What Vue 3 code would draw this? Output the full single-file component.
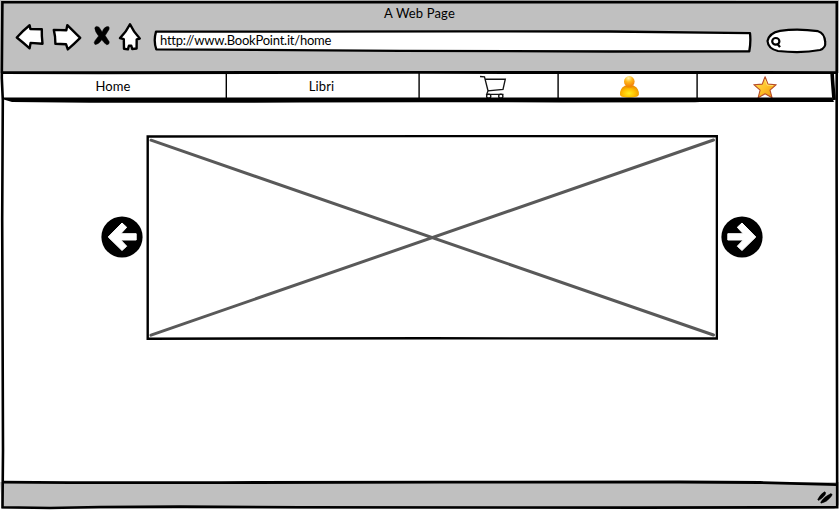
<script setup>
const tabs = [
  { id: 'home', label: 'Home' },
  { id: 'libri', label: 'Libri' },
  { id: 'cart' },
  { id: 'user' },
  { id: 'star' },
]
const arrow = 'M108.2 237 L122 223 L126.7 227.3 L120.8 233.7 H136.2 V240 H120.8 L126.7 246.2 L122 250.5 Z'
</script>

<template>
  <main class="window">
    <header class="chrome">
      <h1 class="title"><span>A Web Page</span></h1>
      <div class="toolbar">
        <svg class="buttons" width="140" height="36" viewBox="8 20 140 36">
          <g fill="#fff" stroke="#000" stroke-width="2.4" stroke-linejoin="round">
            <path d="M16.8 37.5 Q23 30.5 29.6 25.2 L30.4 29 L41.8 29.3 Q41.6 36 42.5 43.7 L30.6 42.9 L29.6 48.3 Q23 42.5 16.8 37.5Z" />
            <path d="M53.8 29.9 L66.3 30.3 L67.3 25.2 Q73.5 31.3 80.2 37.9 Q74 44.1 67.8 49.4 L66 44.2 L55.4 43.7 Q55.5 36.5 53.8 29.9Z" />
            <path d="M130 24.3 Q133.5 32 139.8 38.5 L136.7 39.3 L136.6 48.5 L132.2 49 L131.3 45.8 L128.9 45.8 L127.9 49.4 L124 48.7 L123.8 39.2 L120 38.2 Q126.5 31.5 130 24.3Z" />
          </g>
          <path d="M94.8 27.8 Q96 25.3 99 27.2 L102.2 32 Q104 26.5 108.4 26.6 Q109.7 27.5 109 29.4 L105.2 35.6 L109.2 41.8 Q109.6 44.5 106.8 44.8 Q103.8 42.8 101.8 39.8 Q98.5 44.7 95 44.5 Q93.3 42.8 95 40.7 L98.6 36 Q94.8 31.5 94.8 27.8Z" stroke="#000" stroke-width=".5" />
        </svg>
        <div class="address">
          <svg class="outline" width="602" height="26" viewBox="152 28 602 26">
            <path d="M156 31.6 L285 31.7 L460 31.4 L610 31.5 L750 33.2 Q751 42 749.3 51.3 L610 51.5 L400 50.8 L156.3 49.3 Q153.3 41 156 31.6Z" fill="#fff" stroke="#000" stroke-width="2.3" stroke-linejoin="round" />
          </svg>
          <span class="url">http://www.BookPoint.it/home</span>
        </div>
        <svg class="search" width="66" height="30" viewBox="764 26 66 30" fill="none" stroke="#000" stroke-width="2.2">
          <path d="M780 30.8 Q798 28.2 818 31.2 Q824.5 33 825.2 42 Q826 48 820 50 Q802 53.5 778 51 Q768.2 49 767.5 41 Q769 33 780 30.8Z" fill="#fff" />
          <ellipse cx="775.8" cy="41.3" rx="3.6" ry="3.3" />
          <path d="M777.2 43.5 L780 47.2" />
        </svg>
      </div>
    </header>

    <nav class="tabs">
      <a v-for="tab in tabs" :key="tab.id" class="tab" :class="tab.id">
        <span v-if="tab.label">{{ tab.label }}</span>
        <svg v-else-if="tab.id === 'cart'" width="30" height="24" viewBox="478 75 30 24" fill="none" stroke="#151515" stroke-width="1.35">
          <path d="M480 76.5 L484.5 76.8 L488.2 91.5 M485.1 79.2 H505.3 L503 89.4 L488 90.9 L486.7 94.3 H503.5" />
          <circle cx="488.7" cy="96.2" r="2.1" /><circle cx="500.8" cy="96.2" r="2.1" />
        </svg>
        <svg v-else-if="tab.id === 'user'" width="24" height="24" viewBox="618 75 24 24">
          <defs>
            <radialGradient id="head" cx=".42" cy=".2" r=".9"><stop offset="0" stop-color="#fff5b0" /><stop offset=".4" stop-color="#ffb91c" /><stop offset="1" stop-color="#f07000" /></radialGradient>
            <radialGradient id="body" cx=".48" cy=".65" r=".65"><stop offset="0" stop-color="#ffed20" /><stop offset=".5" stop-color="#ffc000" /><stop offset="1" stop-color="#e88400" /></radialGradient>
          </defs>
          <path d="M624.6 86 Q629.4 84 634.2 86 Q639 88 638.9 94.5 Q638.5 96.6 635 97 Q629.4 98.6 623.5 97 Q620.2 96.5 620 94.5 Q619.9 88 624.6 86Z" fill="url(#body)" />
          <circle cx="629.3" cy="81.4" r="5.3" fill="url(#head)" />
          <path d="M624.8 85.6 Q629.5 89.6 634 85.6" fill="none" stroke="#e98a00" stroke-width=".7" />
        </svg>
        <svg v-else width="26" height="24" viewBox="752 75 26 24">
          <defs><linearGradient id="gold" x1="0" y1="0" x2="1" y2="1"><stop offset="0" stop-color="#ffe263" /><stop offset=".5" stop-color="#ffc329" /><stop offset="1" stop-color="#e98b09" /></linearGradient></defs>
          <path d="M765.1 76.7 L768 84.1 L776.3 84.7 L770 90.1 L772.1 97.8 L765.1 93.7 L758.1 97.8 L760.1 90.1 L753.8 84.7 L762.2 84.1Z" fill="url(#gold)" stroke="#b64b29" stroke-width="1.1" stroke-linejoin="round" />
          <path d="M765.1 79.5 L767.2 85.1 L773.2 85.6" fill="none" stroke="#ffe887" stroke-width=".8" />
        </svg>
      </a>
    </nav>

    <section class="content">
      <svg class="arrow" width="42" height="42" viewBox="101 216 42 42">
        <circle cx="122" cy="237" r="20.6" />
        <path :d="arrow" fill="#fff" stroke="#fff" stroke-width="1" stroke-linejoin="round" />
      </svg>
      <svg class="picture" width="572" height="206" viewBox="146 134 572 206" fill="none">
        <path d="M151 140.2 L713.5 335 M151 335.2 L713.5 140" stroke="#595959" stroke-width="3" stroke-linecap="round" />
        <path d="M147.7 136.5 L430 136.1 L716.9 136.2 L716.9 338.5 L430 338.3 L147.7 338.7Z" stroke="#000" stroke-width="2.4" />
      </svg>
      <svg class="arrow flipped" width="42" height="42" viewBox="101 216 42 42">
        <circle cx="122" cy="237" r="20.6" />
        <path :d="arrow" fill="#fff" stroke="#fff" stroke-width="1" stroke-linejoin="round" />
      </svg>
    </section>

    <footer class="status">
      <svg class="grip" width="20" height="16" viewBox="816 489 20 16">
        <path d="M818.7 499.5 Q821.5 494 825.5 491.8 Q827.5 492 826 495 Q823 499 819.5 500.5Z M821.7 502.2 Q825 496.5 832 493.5 Q834.3 494.2 832 496.8 Q827.5 502.5 822 503.2Z" stroke="#000" stroke-width=".5" />
      </svg>
    </footer>

    <svg class="frame" width="839" height="510" viewBox="0 0 839 510" fill="none" stroke="#000">
      <path d="M0 480 V510 H839 V505 L834 509 L2 509 Z" fill="#fff" stroke="none" />
      <path d="M2.4 2.3 L420 2.1 L836.8 2.3 L836.6 160 L837.2 507.2 L640 507.6 L300 507.2 L180 506.6 L100 507 L50 508 L2.5 507.2 L3 450 L2.2 220 L2.8 100 L1.8 78Z" stroke-width="2.6" />
      <path d="M2 72.6 L100 72.7 L420 72.4 L837 72.6" stroke-width="2.9" />
      <path d="M2 97.6 H832 L834 101.9 L700 102 L695 102.2 L560 102.4 L420 102.2 L300 102.6 L230 102.8 L90 102.8 L12 102 L2 99Z" fill="#000" stroke="none" />
      <path d="M832.1 73 Q832.7 84 834.1 100" stroke-width="3.6" />
      <path d="M226.3 73 V100 M419.1 73 V100 M558.1 73 V100 M697.1 73 V102" stroke-width="1.4" />
      <path d="M2 482.2 L70 482.7 L220 482.6 L440 482.1 L680 482 L760 482.5 L837 484.7" stroke-width="2.8" />
    </svg>
  </main>
</template>

<style>
body { margin: 0; background: #fff; overflow: hidden; }
</style>

<style scoped>
.window { position: relative; display: flex; flex-direction: column; width: 839px; height: 510px; box-sizing: border-box; overflow: hidden; color: #000; font-family: Lato, sans-serif; font-size: 13px; line-height: 18px; }
.chrome { height: 73px; flex: none; background: #c0c0c0; }
.title { margin: 0; padding-top: 4px; height: 16px; font-size: 13px; font-weight: 400; line-height: 18px; text-align: center; letter-spacing: .15px; }
.toolbar { display: flex; padding-left: 8px; height: 36px; }
.buttons { margin-right: 4px; }
.address { display: flex; align-items: center; position: relative; width: 602px; height: 26px; margin-top: 8px; margin-right: 10px; }
.outline { position: absolute; inset: 0; }
.url { position: relative; padding: 0 0 2px 8px; letter-spacing: -.23px; }
.search { margin-top: 6px; }
.tabs { display: grid; grid-template-columns: 226px 193px 139px 139px 136px; height: 27px; flex: none; background: #fff; }
.tab { display: flex; align-items: center; justify-content: center; letter-spacing: .1px; }
.tab span { padding-bottom: 2px; }
.tab.libri { padding-right: 2px; }
.tab svg { margin-top: 1px; }
.tab.cart svg { margin-left: 9px; }
.tab.user svg { margin-left: 5px; }
.content { display: flex; align-items: center; flex: 1; padding: 0 0 108px 101px; gap: 3px; }
.flipped { transform: scaleX(-1); }
.status { display: flex; align-items: flex-end; justify-content: flex-end; height: 28px; flex: none; padding: 0 4px 5px 0; box-sizing: border-box; background: #c0c0c0; }
.frame { position: absolute; inset: 0; pointer-events: none; }
</style>
